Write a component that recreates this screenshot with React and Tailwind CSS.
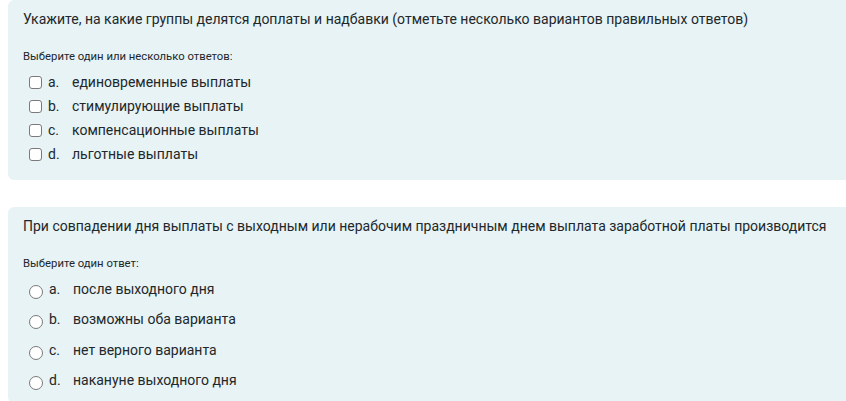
import React from "react";

const multi = {
  text: "Укажите, на какие группы делятся доплаты и надбавки (отметьте несколько вариантов правильных ответов)",
  prompt: "Выберите один или несколько ответов:",
  answers: [
    ["a.", "единовременные выплаты"],
    ["b.", "стимулирующие выплаты"],
    ["c.", "компенсационные выплаты"],
    ["d.", "льготные выплаты"],
  ],
};

const single = {
  text: "При совпадении дня выплаты с выходным или нерабочим праздничным днем выплата заработной платы производится",
  prompt: "Выберите один ответ:",
  answers: [
    ["a.", "после выходного дня"],
    ["b.", "возможны оба варианта"],
    ["c.", "нет верного варианта"],
    ["d.", "накануне выходного дня"],
  ],
};

function CheckBox() {
  return (
    <span className="w-[13px] h-[13px] shrink-0 rounded-[3px] border border-[#7a7a7a] bg-white" />
  );
}

function Radio() {
  return (
    <span className="w-[14px] h-[14px] shrink-0 rounded-full border border-[#7a7a7a] bg-white mt-[9px]" />
  );
}

function Question({ q, type }) {
  return (
    <div className="bg-[#e7f3f5] rounded-l-[6px] ml-[8px] pl-[15px] pt-[9px]">
      <p className="text-[14px] leading-[20px]">{q.text}</p>
      <p className="text-[11.3px] leading-[16px] mt-[20px]">{q.prompt}</p>
      <div className={type === "radio" ? "mt-[4px] pb-[6px]" : "mt-[5px] pb-[14px]"}>
        {q.answers.map(([letter, label]) => (
          <div
            key={letter}
            className={
              type === "radio"
                ? "flex items-start h-[30.3px] pl-[6px]"
                : "flex items-center h-[24px] pl-[6px]"
            }
          >
            {type === "radio" ? <Radio /> : <CheckBox />}
            <span
              className={
                type === "radio"
                  ? "text-[14px] leading-[20px] ml-[6px] w-[24px] mt-[3px]"
                  : "text-[14px] leading-[20px] ml-[6px] w-[24px]"
              }
            >
              {letter}
            </span>
            <span
              className={
                type === "radio"
                  ? "text-[14px] leading-[20px] mt-[3px]"
                  : "text-[14px] leading-[20px]"
              }
            >
              {label}
            </span>
          </div>
        ))}
      </div>
    </div>
  );
}

export default function App() {
  return (
    <div className="w-[846px] h-[401px] overflow-hidden bg-white text-[#22272b] font-['Roboto',_'Liberation_Sans',_sans-serif]">
      <Question q={multi} type="checkbox" />
      <div className="h-[27px]" />
      <Question q={single} type="radio" />
    </div>
  );
}
